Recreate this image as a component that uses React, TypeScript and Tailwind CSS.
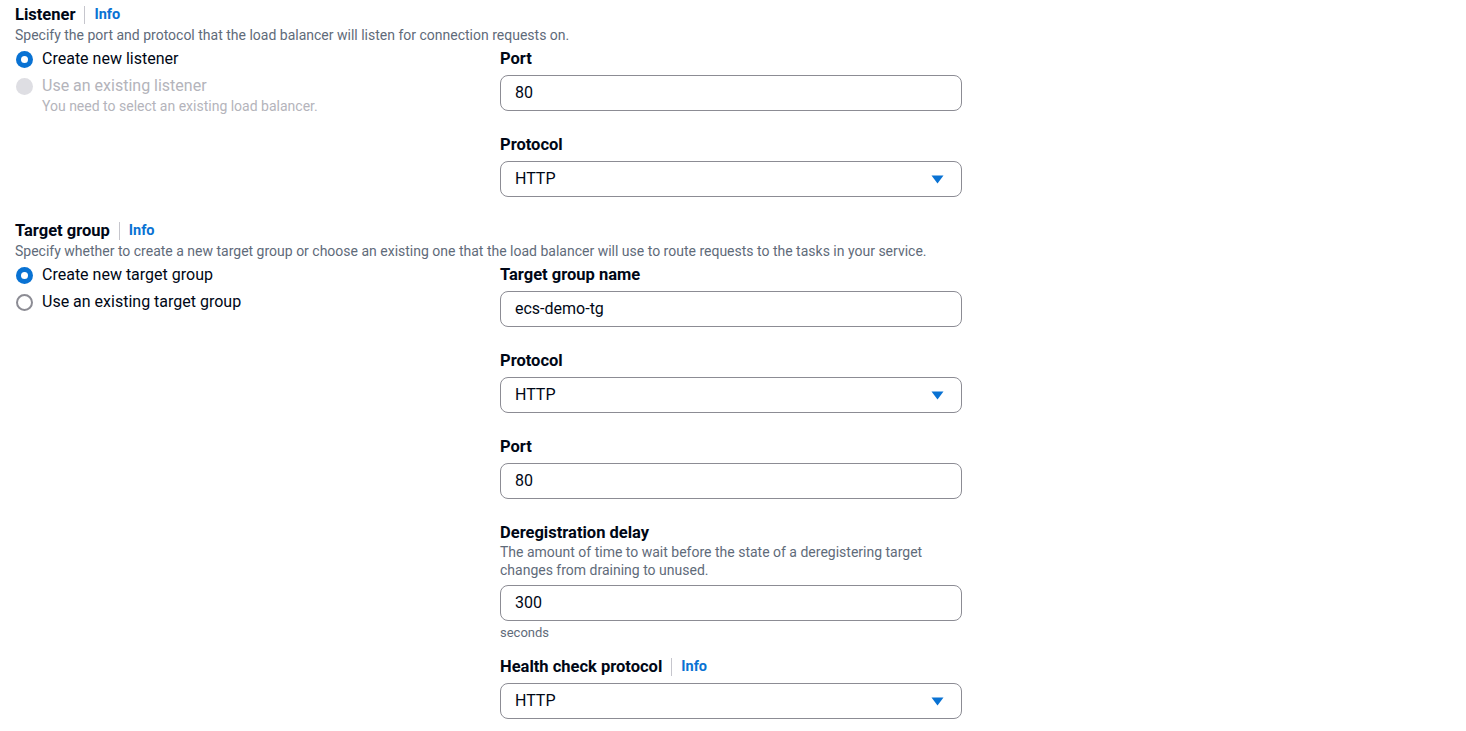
import React from "react";

const font = { fontFamily: 'Roboto, "Open Sans", Arial, sans-serif' };

function Info() {
  return (
    <span className="flex items-center">
      <span className="mx-[9px] h-[18px] w-px bg-[#c6c6cd]" />
      <span className="text-[14.5px] font-bold text-[#0972d3]">Info</span>
    </span>
  );
}

function Radio({ label, checked, disabled, hint }: { label: string; checked?: boolean; disabled?: boolean; hint?: string }) {
  return (
    <div className="flex items-start gap-[9px]">
      <div className="flex h-[20px] items-center">
        {checked ? (
          <span className="flex h-[17px] w-[17px] items-center justify-center rounded-full bg-[#0972d3]">
            <span className="h-[7px] w-[7px] rounded-full bg-white" />
          </span>
        ) : disabled ? (
          <span className="h-[17px] w-[17px] rounded-full bg-[#dedee3]" />
        ) : (
          <span className="h-[17px] w-[17px] rounded-full border-2 border-[#8c8c94]" />
        )}
      </div>
      <div className="flex flex-col">
        <span className={`text-[16px] leading-[20px] ${disabled ? "text-[#b4b4bb]" : "text-[#000716]"}`}>{label}</span>
        {hint && <span className="text-[14px] leading-[20px] text-[#b4b4bb]">{hint}</span>}
      </div>
    </div>
  );
}

function Label({ children, info }: { children: React.ReactNode; info?: boolean }) {
  return (
    <div className="flex h-[20px] items-center">
      <span className="text-[16.5px] font-bold leading-[20px] text-[#000716]">{children}</span>
      {info && <Info />}
    </div>
  );
}

function Input({ value }: { value: string }) {
  return (
    <div className="flex h-[36px] w-[462px] items-center rounded-[8px] border border-[#8c8c94] bg-white px-[14px] text-[16px] text-[#000716]">
      {value}
    </div>
  );
}

function Select({ value }: { value: string }) {
  return (
    <div className="flex h-[36px] w-[462px] items-center justify-between rounded-[8px] border border-[#8c8c94] bg-white pl-[14px] pr-[17px] text-[16px] text-[#000716]">
      <span>{value}</span>
      <svg width="13" height="9" viewBox="0 0 13 9">
        <path d="M0.5 0.5 L12.5 0.5 L6.5 8.5 Z" fill="#0972d3" />
      </svg>
    </div>
  );
}

function Field({ label, info, children }: { label: string; info?: boolean; children: React.ReactNode }) {
  return (
    <div className="flex flex-col">
      <Label info={info}>{label}</Label>
      <div className="mt-[6px]">{children}</div>
    </div>
  );
}

function SectionHeader({ title, desc }: { title: string; desc: string }) {
  return (
    <div className="flex flex-col">
      <div className="flex h-[20px] items-center">
        <span className="text-[16.5px] font-bold leading-[20px] text-[#000716]">{title}</span>
        <Info />
      </div>
      <div className="text-[14px] leading-[20px] text-[#5f6b7a]">{desc}</div>
    </div>
  );
}

export default function App() {
  return (
    <div className="min-h-screen bg-white pl-[15px] pt-[5px]" style={font}>
      <SectionHeader
        title="Listener"
        desc="Specify the port and protocol that the load balancer will listen for connection requests on."
      />
      <div className="mt-[4px] flex">
        <div className="flex w-[485px] flex-col gap-[7px] pl-px">
          <Radio label="Create new listener" checked />
          <Radio label="Use an existing listener" disabled hint="You need to select an existing load balancer." />
        </div>
        <div className="flex flex-col gap-[24px]">
          <Field label="Port">
            <Input value="80" />
          </Field>
          <Field label="Protocol">
            <Select value="HTTP" />
          </Field>
        </div>
      </div>

      <div className="mt-[24px]">
        <SectionHeader
          title="Target group"
          desc="Specify whether to create a new target group or choose an existing one that the load balancer will use to route requests to the tasks in your service."
        />
      </div>
      <div className="mt-[4px] flex">
        <div className="flex w-[485px] flex-col gap-[7px] pl-px">
          <Radio label="Create new target group" checked />
          <Radio label="Use an existing target group" />
        </div>
        <div className="flex flex-col gap-[24px]">
          <Field label="Target group name">
            <Input value="ecs-demo-tg" />
          </Field>
          <Field label="Protocol">
            <Select value="HTTP" />
          </Field>
          <Field label="Port">
            <Input value="80" />
          </Field>
          <div className="flex flex-col">
            <Label>Deregistration delay</Label>
            <div className="w-[440px] text-[14px] leading-[18px] text-[#5f6b7a]">
              The amount of time to wait before the state of a deregistering target changes from draining to unused.
            </div>
            <div className="mt-[6px]">
              <Input value="300" />
            </div>
            <div className="mt-[3px] text-[13px] leading-[18px] text-[#5f6b7a]">seconds</div>
            <div className="mt-[15px]">
              <Field label="Health check protocol" info>
                <Select value="HTTP" />
              </Field>
            </div>
          </div>
        </div>
      </div>
    </div>
  );
}
